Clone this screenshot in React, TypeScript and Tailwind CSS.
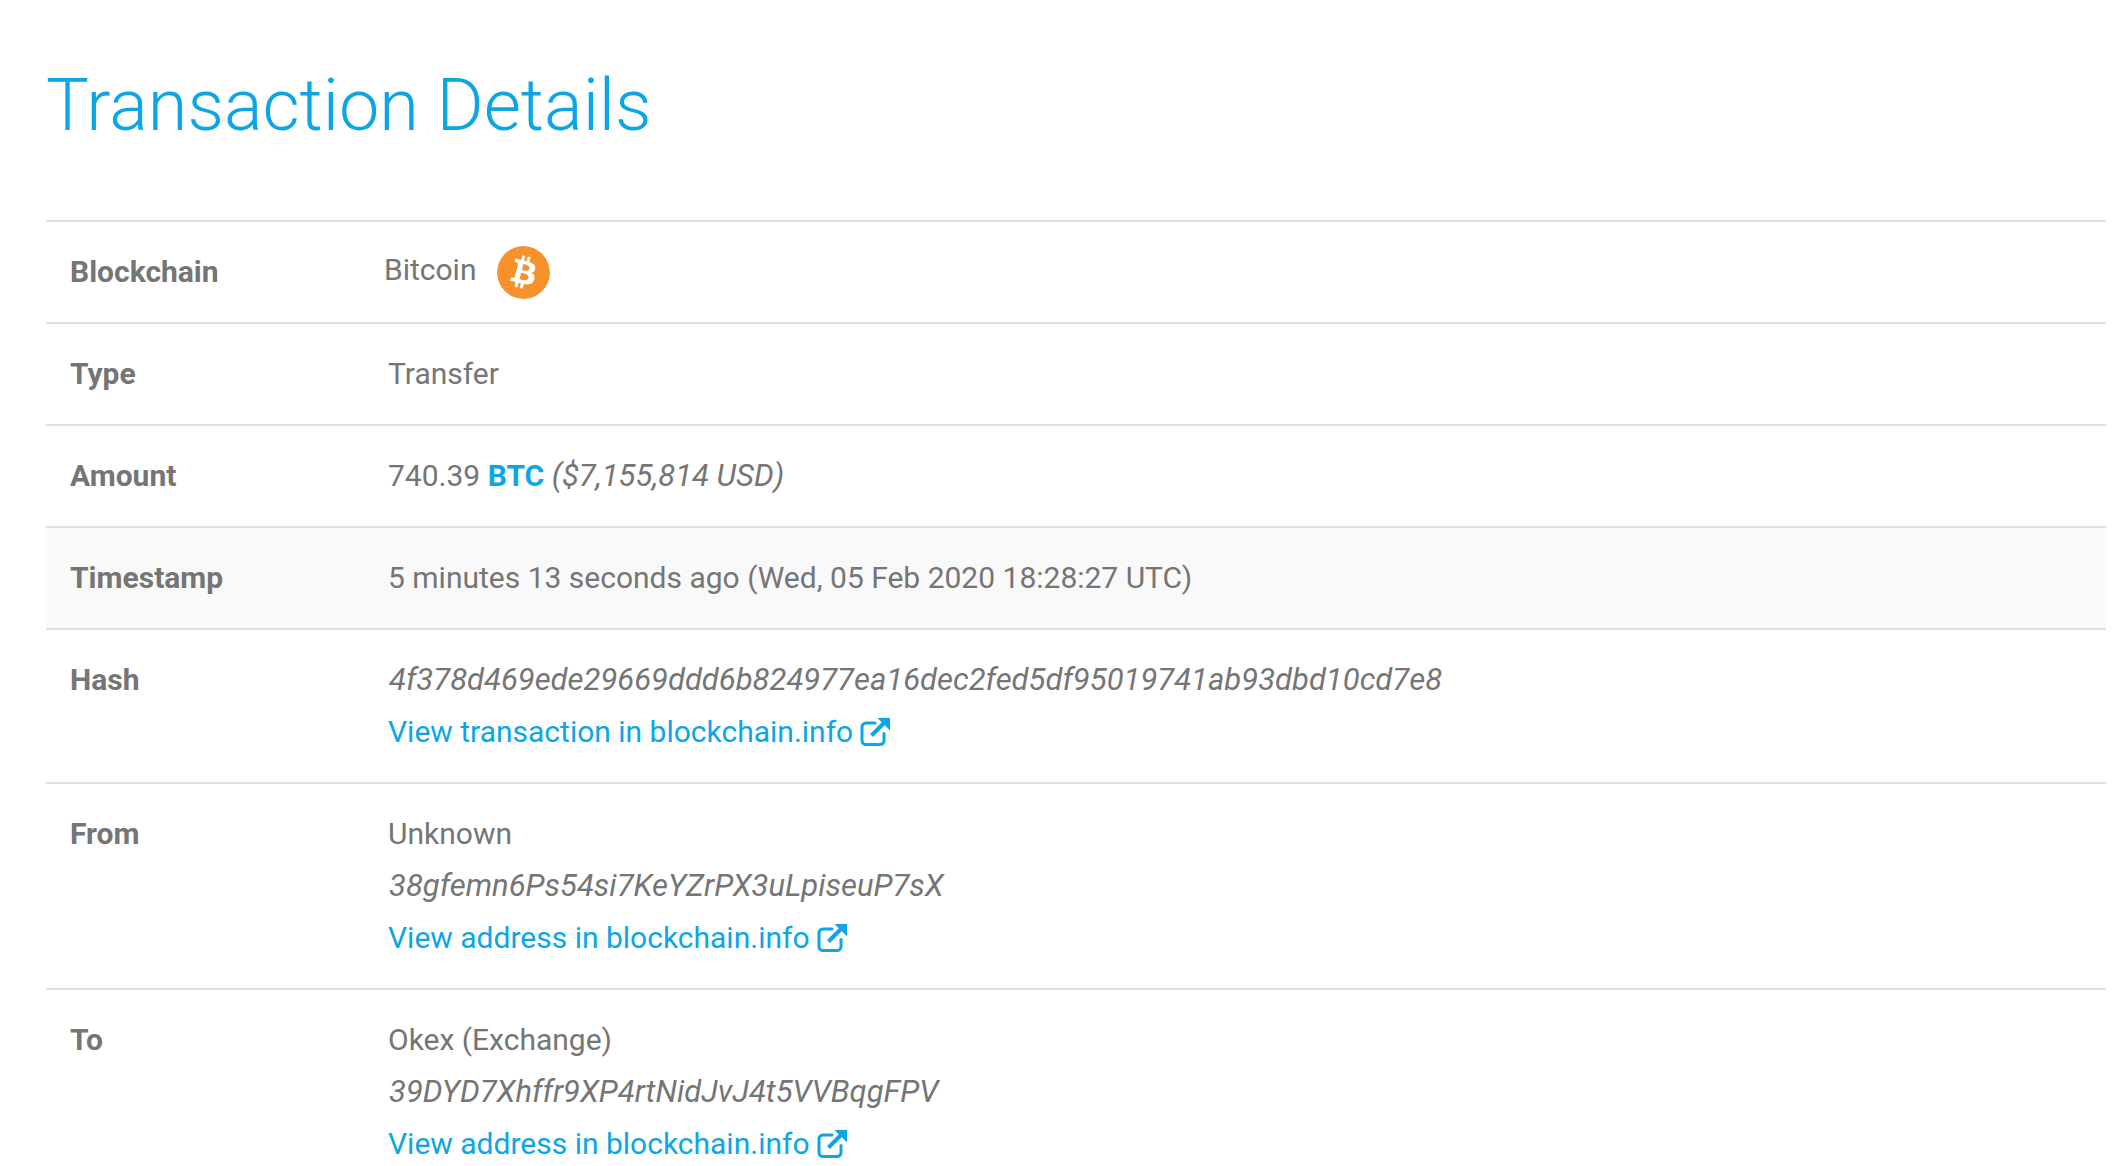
import { SiBitcoin } from "react-icons/si";

type Row = {
  label: string;
  highlight?: boolean;
  content: React.ReactNode;
};

function ExternalIcon() {
  return (
    <svg viewBox="0 0 32 32" className="inline-block w-[32px] h-[32px] ml-[6px] align-[-6px]" fill="none">
      <path
        d="M25 17.5v7a4 4 0 0 1-4 4H7a4 4 0 0 1-4-4V11a4 4 0 0 1 4-4h9"
        stroke="currentColor"
        strokeWidth="3"
        strokeLinecap="round"
      />
      <path d="M12.5 19.5 25 7" stroke="currentColor" strokeWidth="4" />
      <path d="M18.5 2h12.5v12.5z" fill="currentColor" />
    </svg>
  );
}

function ViewLink({ text }: { text: string }) {
  return (
    <div className="text-[#0ca6e6]">
      {text}
      <ExternalIcon />
    </div>
  );
}

const rows: Row[] = [
  {
    label: "Blockchain",
    content: (
      <div className="flex items-center -ml-[4px] h-[52px]">
        <span className="-mt-[4px]">Bitcoin</span>
        <SiBitcoin className="ml-[21px] w-[53px] h-[53px] text-[#f6912c] bg-white rounded-full" />
      </div>
    ),
  },
  { label: "Type", content: <div>Transfer</div> },
  {
    label: "Amount",
    content: (
      <div>
        740.39 <span className="font-bold text-[#0ca6e6]">BTC</span>{" "}
        <em className="text-[31px]">($7,155,814 USD)</em>
      </div>
    ),
  },
  {
    label: "Timestamp",
    highlight: true,
    content: <div>5 minutes 13 seconds ago (Wed, 05 Feb 2020 18:28:27 UTC)</div>,
  },
  {
    label: "Hash",
    content: (
      <>
        <div className="italic text-[31px] pl-[1px]">4f378d469ede29669ddd6b824977ea16dec2fed5df95019741ab93dbd10cd7e8</div>
        <ViewLink text="View transaction in blockchain.info" />
      </>
    ),
  },
  {
    label: "From",
    content: (
      <>
        <div>Unknown</div>
        <div className="italic text-[31px] pl-[1px]">38gfemn6Ps54si7KeYZrPX3uLpiseuP7sX</div>
        <ViewLink text="View address in blockchain.info" />
      </>
    ),
  },
  {
    label: "To",
    content: (
      <>
        <div>Okex (Exchange)</div>
        <div className="italic text-[31px] pl-[1px]">39DYD7Xhffr9XP4rtNidJvJ4t5VVBqgFPV</div>
        <ViewLink text="View address in blockchain.info" />
      </>
    ),
  },
];

export default function App() {
  return (
    <main className="h-[1166px] overflow-hidden bg-white pl-[46px] pr-[12px] font-['Roboto',sans-serif] text-[#757575]">
      <h1 className="pt-[53px] h-[220px] text-[72px] leading-[105px] font-light text-[#0ca6e6]">Transaction Details</h1>

      <div className="border-t-2 border-[#e0e0e0]">
        {rows.map((row) => (
          <div
            key={row.label}
            className={`flex border-b-2 border-[#e0e0e0] pt-[24px] pb-[24px] text-[30px] leading-[52px] ${
              row.highlight ? "bg-[#f9f9f9]" : ""
            }`}
          >
            <div className="w-[342px] shrink-0 pl-[24px] font-bold">{row.label}</div>
            <div>{row.content}</div>
          </div>
        ))}
      </div>
    </main>
  );
}
